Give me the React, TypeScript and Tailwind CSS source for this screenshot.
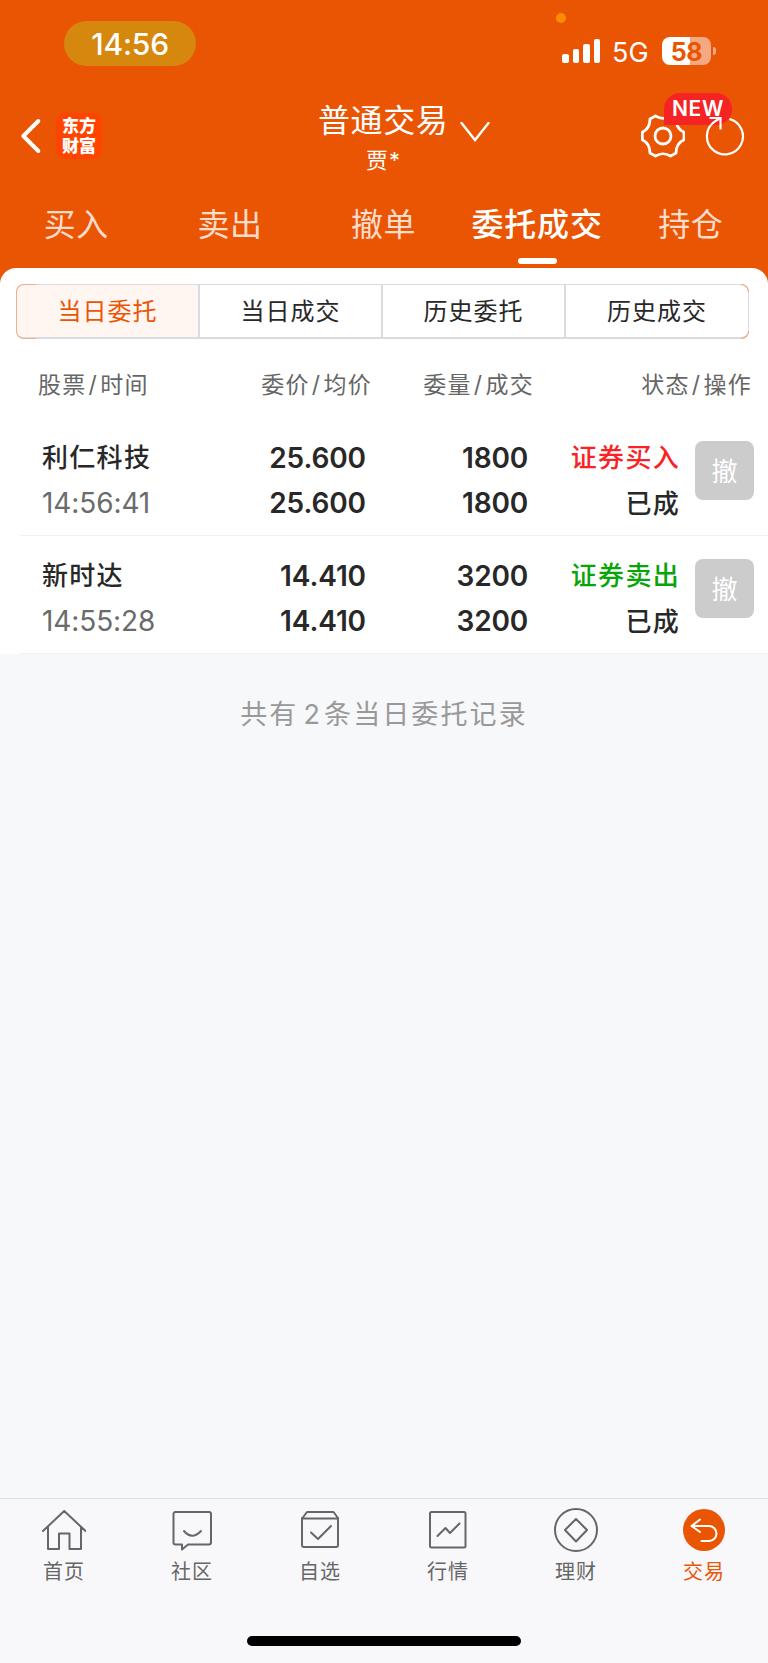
import React from 'react';

interface Order {
  id: number;
  name: string;
  time: string;
  price: string;
  avgPrice: string;
  amount: string;
  dealt: string;
  side: 'buy' | 'sell';
  sideText: string;
  status: string;
}

const orders: Order[] = [
  {
    id: 1,
    name: '利仁科技',
    time: '14:56:41',
    price: '25.600',
    avgPrice: '25.600',
    amount: '1800',
    dealt: '1800',
    side: 'buy',
    sideText: '证券买入',
    status: '已成',
  },
  {
    id: 2,
    name: '新时达',
    time: '14:55:28',
    price: '14.410',
    avgPrice: '14.410',
    amount: '3200',
    dealt: '3200',
    side: 'sell',
    sideText: '证券卖出',
    status: '已成',
  },
];

const tabs = ['买入', '卖出', '撤单', '委托成交', '持仓'];
const segments = ['当日委托', '当日成交', '历史委托', '历史成交'];

const StatusBar: React.FC = () => (
  <div className="relative flex h-[88px] items-start justify-between pl-16 pr-[52px]">
    <div className="mt-[21px] flex h-[45px] w-[132px] items-center justify-center rounded-full bg-[#d6870e] pt-[2px] text-[30px] font-medium tracking-[-0.2px]">
      14:56
    </div>
    <span className="absolute left-[556px] top-[13px] h-[10px] w-[10px] rounded-full bg-[#ff8c00]" />
    <div className="mt-[37px] flex h-7 items-center">
      <div className="flex h-6 items-end gap-[4px]">
        <span className="h-[9px] w-[6.5px] rounded-[2px] bg-white" />
        <span className="h-[14px] w-[6.5px] rounded-[2px] bg-white" />
        <span className="h-[19px] w-[6.5px] rounded-[2px] bg-white" />
        <span className="h-6 w-[6.5px] rounded-[2px] bg-white" />
      </div>
      <span className="ml-3 w-[50px] pt-[3px] text-[27px] leading-7">5G</span>
      <div className="flex h-7 w-[49px] items-center justify-center rounded-[8px] bg-[linear-gradient(90deg,#fff_57%,#f5a982_57%)] pt-[2px] text-[25px] font-bold leading-none tracking-[-0.3px] text-[#ea5504]">
        58
      </div>
      <span className="ml-[2px] h-[8px] w-[3px] rounded-r-full bg-[#f5a982]" />
    </div>
  </div>
);

const NavBar: React.FC = () => (
  <div className="relative flex h-[92px] justify-between">
    <div className="flex h-24 items-center pl-5">
      <svg className="h-9 w-[22px]" viewBox="0 0 22 36" fill="none" stroke="#fff" strokeWidth="4" strokeLinecap="round" strokeLinejoin="round">
        <path d="M18.3 3 3.3 18l15 15" />
      </svg>
      <div className="ml-[14px] flex h-[46px] w-[46px] flex-col items-center justify-center rounded-[9px] bg-[#ff4400] text-[17px] font-black leading-[20px]">
        <span className="h-5">东方</span>
        <span className="h-5">财富</span>
      </div>
    </div>

    <div className="absolute left-[318px] top-[14px] flex w-[172px] flex-col">
      <div className="flex h-[38px] items-center">
        <span className="whitespace-nowrap text-[32px] leading-[38px] tracking-[0.6px]">普通交易</span>
        <svg className="ml-[12px] mt-[21px] h-5 w-[30px] shrink-0" viewBox="0 0 30 20" fill="none" stroke="#fff" strokeWidth="2.4" strokeLinecap="round">
          <path d="M1.5 1 15 18l13.500-17" />
        </svg>
      </div>
      <span className="ml-[48px] mt-[5px] text-[22px] leading-[30px] tracking-[1px]">贾*</span>
    </div>

    <div className="flex h-24 items-center gap-[20px] pr-[23px]">
      <svg className="h-[44px] w-[44px]" viewBox="0 0 44 44" fill="none" stroke="#fff" strokeWidth="2.8" strokeLinejoin="round">
        <path d="M14.500 1.900C19 5 25 5 29.500 1.900L35 5C35 10.500 37 15.500 43 18.300V25.700C37 28.500 35 33.500 35 39L29.500 42.100C25 39 19 39 14.500 42.100L9 39C9 33.500 7 28.500 1.300 25.700V18.300C7 15.500 9 10.500 9 5Z" />
        <circle cx="22" cy="22" r="8" />
      </svg>
      <svg className="z-10 h-[42px] w-[40px]" viewBox="0 0 40 42" fill="none" stroke="#fff" strokeWidth="2.200">
        <path d="M24.500 4A18 18 0 1 1 10 6.400L15.500 3" />
        <path d="M4.500 3h11v11.500" />
      </svg>
    </div>
    <span className="absolute left-[664px] top-[5px] flex h-8 w-[68px] items-center justify-center rounded-t-[16px] rounded-br-[16px] bg-[#f52323] text-[21px] font-semibold tracking-[0.7px]">
      NEW
    </span>
  </div>
);

const TabIcon: React.FC<{ name: string }> = ({ name }) => {
  const props = {
    className: 'h-[44px] w-[44px]',
    viewBox: '0 0 44 44',
    fill: 'none',
    stroke: '#666',
    strokeWidth: 2,
    strokeLinecap: 'round' as const,
    strokeLinejoin: 'round' as const,
  };
  switch (name) {
    case '首页':
      return (
        <svg {...props}>
          <path d="M1 23 22.200 3 43.500 23M6 19v22h11V25.500h10.500V41H39V19" />
        </svg>
      );
    case '社区':
      return (
        <svg {...props}>
          <path d="M5 4h34a2 2 0 0 1 2 2v28.500a2 2 0 0 1-2 2H18L12 41.500v-5H5.500a2 2 0 0 1-2-2V6a2 2 0 0 1 1.500-2Z" />
          <path d="M14 23q8 9.500 17 0" />
        </svg>
      );
    case '自选':
      return (
        <svg {...props}>
          <path d="M4.500 10 9 4h26.500l4.500 6v27a2 2 0 0 1-2 2H6a2 2 0 0 1-2-2V10M4.500 10.500h35" />
          <path d="m13 24.500 7 6.500 13-13" />
        </svg>
      );
    case '行情':
      return (
        <svg {...props}>
          <rect x="4" y="4" width="35.500" height="35.500" rx="1.500" />
          <path d="m11.500 28 8-8 4.500 5 9.500-9.500" />
        </svg>
      );
    case '理财':
      return (
        <svg {...props}>
          <circle cx="22" cy="22" r="21" />
          <path d="M22 11 33 22 22 33.500 11 22Z" />
        </svg>
      );
    default:
      return (
        <svg {...props} stroke="#fff">
          <circle cx="22" cy="22" r="21" fill="#ea5504" stroke="none" />
          <path d="m18 11.500-8.500 6.500 8.500 6M10 18h17a7.500 7.500 0 0 1 0 15h-7.500" />
        </svg>
      );
  }
};

const BottomBar: React.FC = () => (
  <nav className="flex h-[165px] flex-col items-center border-t border-[#dedfe2] bg-[#f8f8fb]">
    <div className="grid h-[137px] w-full grid-cols-6">
      {['首页', '社区', '自选', '行情', '理财', '交易'].map((item) => (
        <div
          key={item}
          className={`flex flex-col items-center pt-[9px] ${item === '交易' ? 'text-[#ea5504]' : 'text-[#666]'}`}
        >
          <TabIcon name={item} />
          <span className="mt-[5px] text-[20px] leading-[30px] tracking-[1px]">{item}</span>
        </div>
      ))}
    </div>
    <div className="h-[10px] w-[274px] rounded-full bg-black" />
  </nav>
);

export default function App() {
  return (
    <div className="flex h-[1663px] w-[768px] flex-col overflow-hidden bg-[#f7f8fa] font-['Inter','Noto_Sans_CJK_SC',sans-serif] text-[#282828]">
      {/* 顶部 */}
      <header className="h-[290px] shrink-0 bg-[#ea5504] text-white">
        <StatusBar />
        <NavBar />
        <div className="grid h-[88px] grid-cols-5">
          {tabs.map((tab) => (
            <div
              key={tab}
              className={`flex flex-col items-center pt-[23px] text-[32px] leading-[44px] ${tab === '委托成交' ? 'font-medium tracking-[0.8px]' : 'tracking-[0.5px] text-[#fcdccb]'}`}
            >
              <span className="-ml-px">{tab}</span>
              {tab === '委托成交' && <span className="mt-[11px] h-[6px] w-[39px] rounded-full bg-white" />}
            </div>
          ))}
        </div>
      </header>

      <main className="-mt-[22px] flex-1">
        <section className="h-[386px] rounded-t-[16px] bg-white pt-4">
          {/* 分段选择 */}
          <div className="relative ml-4 h-[55px] w-[733px]">
            <div className="grid h-full grid-cols-[181px_183px_183px_184px] overflow-hidden rounded-[8px] border border-b-2 border-[#dadbe0]">
              {segments.map((segment, index) => (
                <div
                  key={segment}
                  className={`flex items-center justify-center pt-[2px] text-[24px] tracking-[1px] ${index === 0 ? 'bg-[#fff5f1] text-[#ea5504]' : 'border-l-2 border-[#dadbe0]'}`}
                >
                  {segment}
                </div>
              ))}
            </div>
            <span className="absolute left-0 top-0 h-full w-5 rounded-l-[8px] border border-r-0 border-[#efb08f]" />
            <span className="absolute right-0 top-0 h-2 w-2 rounded-tr-[8px] border-r border-t border-[#efa37c]" />
            <span className="absolute bottom-0 right-0 h-2 w-2 rounded-br-[8px] border-b border-r border-[#efa37c]" />
          </div>

          {/* 表头 */}
          <div className="flex h-[79px] pl-[38px] pt-[28px] text-[23px] leading-[36px] tracking-[1.3px] text-[#666]">
            <span className="w-[110px] whitespace-nowrap">股票<i className="mx-[2px] not-italic">/</i>时间</span>
            <span className="w-[224px] text-right">委价<i className="mx-[2px] not-italic">/</i>均价</span>
            <span className="w-[162px] text-right">委量<i className="mx-[2px] not-italic">/</i>成交</span>
            <span className="w-[218px] text-right">状态<i className="mx-[2px] not-italic">/</i>操作</span>
          </div>

          {/* 委托列表 */}
          {orders.map((order) => (
            <div
              key={order.id}
              className="ml-5 flex h-[118px] border-b border-[#f0f1f3] pl-[22px] pt-[18px] text-[26px] font-medium leading-[45px] tracking-[1.3px]"
            >
              <div className="w-[120px]">
                <div className="-mt-px mb-px whitespace-nowrap">{order.name}</div>
                <div className="whitespace-nowrap text-[28px] font-normal tracking-[-0.1px] text-[#6b6b6b]">{order.time}</div>
              </div>
              <div className="w-[204px] text-right text-[28px] font-semibold tracking-[-0.1px]">
                <div>{order.price}</div>
                <div>{order.avgPrice}</div>
              </div>
              <div className="w-[162px] text-right text-[28px] font-semibold tracking-[-0.2px]">
                <div>{order.amount}</div>
                <div>{order.dealt}</div>
              </div>
              <div className="w-[152px] text-right">
                <div className={`-mt-px mb-px ${order.side === 'buy' ? 'text-[#fa2222]' : 'text-[#07a507]'}`}>{order.sideText}</div>
                <div>{order.status}</div>
              </div>
              <button className="ml-[15px] mt-[5px] h-[59px] w-[59px] rounded-[8px] bg-[#ccc] pt-px text-[26px] font-normal tracking-normal text-white">
                撤
              </button>
            </div>
          ))}
        </section>

        <p className="pt-[39px] text-center text-[27px] leading-[44px] tracking-[2.1px] text-[#999]">
          共有<span className="ml-[5px] mr-[2px]">2</span>条当日委托记录
        </p>
      </main>

      <BottomBar />
    </div>
  );
}
